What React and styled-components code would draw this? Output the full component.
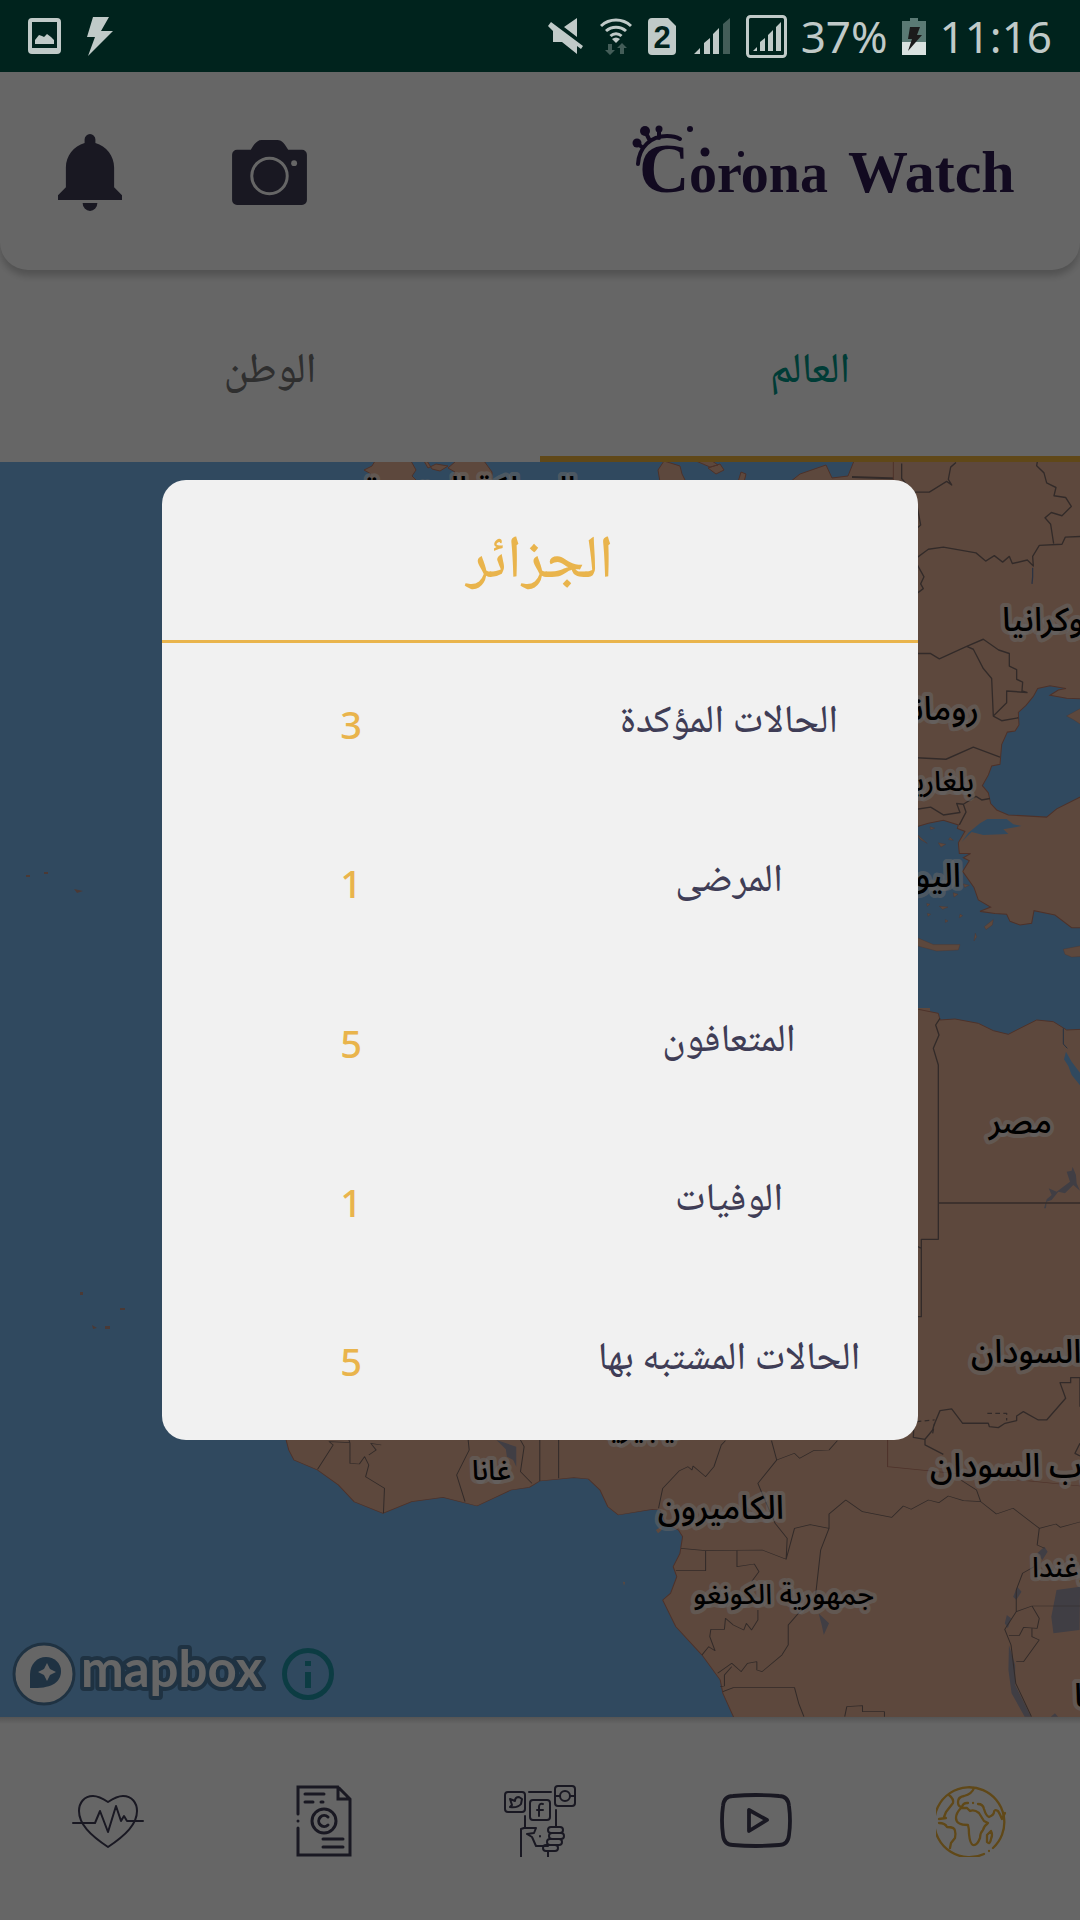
import React, { useState } from "react";
import styled, { createGlobalStyle } from "styled-components";

const GlobalStyle = createGlobalStyle`
  * { box-sizing: border-box; }
  body { margin: 0; background: #ffffff; }
  button { border: 0; padding: 0; background: none; color: inherit; font: inherit; cursor: pointer; }
  svg { display: block; flex: none; }
`;

const arabic = `"Noto Naskh Arabic", "Noto Sans", "DejaVu Sans", sans-serif`;
const ink = "#3f3d56";
const gold = "#e9b44c";

const Page = styled.div`
  min-height: 100vh;
  display: flex;
  flex-direction: column;
  font-family: ${arabic};
`;

/* ---------- status bar ---------- */

const StatusBar = styled.div`
  position: relative;
  z-index: 3;
  height: 72px;
  display: flex;
  justify-content: space-between;
  align-items: center;
  padding: 0 28px;
  background: #00231d;
  color: #c0cac8;
`;

const StatusGroup = styled.div`
  display: flex;
  align-items: center;
  gap: ${(p) => p.$gap}px;
`;

const StatusText = styled.span`
  font: 44px/72px "Noto Sans", sans-serif;
`;

/* ---------- header ---------- */

const Header = styled.header`
  position: relative;
  z-index: 1;
  height: 198px;
  display: flex;
  justify-content: space-between;
  align-items: center;
  padding: 0 60px 0 58px;
  border-radius: 0 0 28px 28px;
  background: #ffffff;
  box-shadow: 0 6px 7px rgba(0, 0, 0, 0.2);
`;

const HeaderActions = styled.div`
  display: flex;
  align-items: center;
  gap: 110px;
  padding-top: 2px;
  color: ${ink};
`;

/* ---------- tabs ---------- */

const Tabs = styled.div`
  display: flex;
  direction: ltr;
`;

const Tab = styled.button`
  && {
    flex: 1;
    height: 192px;
    padding: 20px 0 0;
    border-bottom: 6px solid ${(p) => (p.$active ? "#f0b43c" : "transparent")};
    color: ${(p) => (p.$active ? "#009688" : "#757575")};
    font: 500 42px/64px ${arabic};
  }
`;

/* ---------- map ---------- */

const MapArea = styled.main`
  position: relative;
  flex: 1;
  min-height: 600px;
  overflow: hidden;
  background: #78b6ed;
`;

const MapCanvas = styled.svg`
  position: absolute;
  inset: 0;
  width: 100%;
  height: 100%;
`;

const MapLabel = styled.text`
  font: 500 ${(p) => p.$size}px "Noto Sans Arabic", "DejaVu Sans", sans-serif;
  fill: #000000;
  stroke: rgba(255, 255, 255, 0.55);
  stroke-width: 8px;
  stroke-linejoin: round;
  paint-order: stroke;
  direction: rtl;
`;

const Attribution = styled.div`
  position: absolute;
  left: 12px;
  bottom: 11px;
  display: flex;
  align-items: center;
  gap: 16px;
`;

const LogoText = styled.text`
  font: 700 51px Lato, sans-serif;
  fill: #ffffff;
  stroke: #4e7da5;
  stroke-width: 8px;
  stroke-linejoin: round;
  paint-order: stroke;
`;

/* ---------- bottom navigation ---------- */

const BottomNav = styled.nav`
  height: 203px;
  display: flex;
  background: linear-gradient(#d4d4d4, #ffffff 7px);
`;

const NavButton = styled.button`
  flex: 1;
  && {
    display: flex;
    align-items: center;
    justify-content: center;
    padding-top: 4px;
    color: ${(p) => (p.$active ? "#f0b43c" : ink)};
  }
`;

/* ---------- dialog ---------- */

const Backdrop = styled.div`
  position: fixed;
  inset: 0;
  z-index: 2;
  display: flex;
  align-items: center;
  justify-content: center;
  background: rgba(0, 0, 0, 0.6);
`;

const Dialog = styled.section`
  width: 70%;
  min-height: 50vh;
  display: flex;
  flex-direction: column;
  border-radius: 24px;
  background: #f1f1f1;
  direction: rtl;
`;

const DialogTitle = styled.h2`
  margin: 0;
  padding: 36px 0 28px;
  border-bottom: 3px solid ${gold};
  color: ${gold};
  text-align: center;
  font: 500 60px/96px ${arabic};
`;

const Stats = styled.dl`
  flex: 1;
  margin: 0;
  display: flex;
  flex-direction: column;
`;

const StatRow = styled.div`
  flex: 1;
  display: grid;
  grid-template-columns: 1fr 1fr;
  align-items: center;
  padding-top: 2px;
  text-align: center;
`;

const StatLabel = styled.dt`
  color: ${ink};
  font: 500 39px/64px ${arabic};
`;

const StatValue = styled.dd`
  margin: 0;
  color: ${gold};
  font: 500 38px/64px "Noto Sans", sans-serif;
`;

/* ---------- drawings ---------- */

const PhotoIcon = () => (
  <svg width="33" height="36" viewBox="0 0 33 36">
    <path fill="currentColor" fillRule="evenodd" d="M4 0h25a4 4 0 0 1 4 4v28a4 4 0 0 1-4 4H4a4 4 0 0 1-4-4V4a4 4 0 0 1 4-4zM4 4v26h25V4z" />
    <path fill="currentColor" d="M7 26v-4l4-5 3 1 2 1 3-3 4 3 3 3v4z" />
  </svg>
);

const BoltIcon = () => (
  <svg width="26" height="39" viewBox="0 0 26 39">
    <path fill="currentColor" d="M6 0h16l-8 14h12L1 39l7-19H0z" />
  </svg>
);

const MuteIcon = () => (
  <svg width="36" height="36" viewBox="0 0 36 36">
    <path fill="currentColor" d="M29 0v19L16 9zM3 4l32 24-2 3-4-3v8L14 24H5V13L0 8z" />
  </svg>
);

const WifiIcon = () => (
  <svg width="32" height="37" viewBox="0 0 32 37">
    <g fill="none" stroke="currentColor" strokeWidth="3">
      <path d="M1 8a22 22 0 0 1 30 0M6 13a15 15 0 0 1 20 0M10.500 18a8 8 0 0 1 11 0" />
    </g>
    <path fill="currentColor" d="M12 21q4-3 8 0l-4 4z" />
    <path fill="currentColor" opacity=".35" d="M8 26h4v6h3l-5 5-5-5h3zM20 36v-6h-3l5-5 5 5h-3v6z" />
  </svg>
);

const SimDigit = styled.text`
  font: 700 31px "Liberation Sans", sans-serif;
  fill: #00231d;
`;

const SimIcon = () => (
  <svg width="30" height="37" viewBox="0 0 30 37">
    <path fill="currentColor" d="M4 0h16l8 8v25a4 4 0 0 1-4 4H4a4 4 0 0 1-4-4V4a4 4 0 0 1 4-4z" />
    <SimDigit x="14" y="30" textAnchor="middle">2</SimDigit>
  </svg>
);

const SignalIcon = () => (
  <svg width="36" height="36" viewBox="0 0 36 36">
    <path fill="currentColor" d="M0 36l6-6v6zM10 36V25l6-5v16zM19 36V16l6-6v26z" />
    <path fill="currentColor" opacity=".35" d="M29 36V6l7-6v36z" />
  </svg>
);

const BoxedSignalIcon = () => (
  <svg width="41" height="43" viewBox="0 0 41 43">
    <rect x="1.500" y="1.500" width="38" height="40" rx="3" fill="none" stroke="currentColor" strokeWidth="3" />
    <path fill="currentColor" d="M7 36l4-4v4zM14 36v-9l5-4v13zM22 36V20l5-5v21zM30 36V12l5-5v29z" />
  </svg>
);

const BatteryIcon = () => (
  <svg width="24" height="37" viewBox="0 0 24 37">
    <path fill="#5a7a74" d="M8 0h8v3h8v21H0V3h8z" />
    <path fill="#d9e2e0" d="M0 24h24v13H0z" />
    <path fill="#1b1b1b" d="M8 9h10l-3 8h5L6 33l4-12H6z" />
  </svg>
);

const BellIcon = () => (
  <svg width="64" height="77" viewBox="0 0 65 78" fill="currentColor">
    <path d="M32.500 0a5.500 5.500 0 0 1 5.500 5.500V9c11 3 19 13 19 25v20l8 8v5H0v-5l8-8V34C8 22 16 12 27 9V5.500A5.500 5.500 0 0 1 32.500 0z" />
    <path d="M25 70h15a7.500 8 0 0 1-15 0z" />
  </svg>
);

const CameraIcon = () => (
  <svg width="75" height="65" viewBox="0 0 76 66">
    <path fill="currentColor" d="M30 0h16c5 0 8 5 11 10h14a5 5 0 0 1 5 5v46a5 5 0 0 1-5 5H5a5 5 0 0 1-5-5V15a5 5 0 0 1 5-5h14C22 5 25 0 30 0z" />
    <circle cx="38" cy="36.500" r="18" fill="none" stroke="#ffffff" strokeWidth="3" />
    <circle cx="63" cy="23.500" r="3" fill="#ffffff" />
  </svg>
);

const BrandText = styled.text`
  font: 700 ${(p) => p.$size}px "Liberation Serif", serif;
`;

const BrandLogo = () => (
  <svg width="388" height="94" viewBox="0 0 388 94" fill="#2d1b52" role="img" aria-label="Corona Watch">
    <BrandText $size={70} x="7" y="68">C</BrandText>
    <BrandText $size={56} x="57" y="68">orona</BrandText>
    <BrandText $size={60} x="216" y="68">Watch</BrandText>
    <path d="M6 40C7 23 19 12 35 12q8 0 13 3M13 7l5 10M27 5v9M5 19l6 5" fill="none" stroke="#2d1b52" strokeWidth="4" strokeLinecap="round" />
    <circle cx="13" cy="7" r="5" />
    <circle cx="27" cy="5" r="3.500" />
    <circle cx="5" cy="19" r="4.500" />
    <circle cx="58" cy="5" r="3" />
    <circle cx="73" cy="28" r="4.500" />
    <circle cx="109" cy="30" r="3" />
  </svg>
);

const MapboxLogo = () => (
  <svg width="254" height="64" viewBox="0 0 254 64" role="img" aria-label="mapbox">
    <circle cx="32" cy="32" r="30" fill="#ffffff" stroke="#4e7da5" strokeWidth="3" />
    <path fill="#4e7da5" d="M18 46V33c0-11 7-18 16-18 8 0 15 6 15 14 0 11-9 18-31 17z" />
    <path fill="#ffffff" d="M35 21l3 6 6 3-6 3-3 6-3-6-6-3 6-3z" />
    <LogoText x="69" y="45">mapbox</LogoText>
  </svg>
);

const InfoIcon = () => (
  <svg width="52" height="52" viewBox="0 0 52 52">
    <circle cx="26" cy="26" r="23.500" fill="none" stroke="#2096a8" strokeWidth="5" />
    <path fill="#2096a8" d="M23 13h6v5h-6zM23 24h6v16h-6z" />
  </svg>
);

const lineProps = { fill: "none", stroke: "currentColor", strokeLinecap: "round", strokeLinejoin: "round" };

const HeartIcon = () => (
  <svg width="72" height="72" viewBox="0 0 72 72" {...lineProps} strokeWidth="2">
    <path d="M36 17C30 13 26 11 21 11 12 11 7 18 7 26c0 13 11 24 29 36 18-12 29-23 29-36 0-8-5-15-14-15-5 0-9 2-15 6z" />
    <path d="M1 38h22l5-12 8 21 8-26 5 15 3-5 3 5h16" />
  </svg>
);

const DocumentIcon = () => (
  <svg width="72" height="72" viewBox="0 0 72 72" {...lineProps} strokeWidth="3" strokeLinejoin="miter">
    <path d="M10 29V2h40l12 12v56H10V43M50 2v12h12M10 36v.1M17 9h19M17 17h8M33 17h2M35 54h20M35 62h20" />
    <circle cx="36" cy="36" r="12" />
    <path d="M40 32a5.500 5.500 0 1 0 0 8" />
  </svg>
);

const SocialIcon = () => (
  <svg width="72" height="72" viewBox="0 0 72 72" {...lineProps} strokeWidth="2">
    <rect x="1" y="7" width="20" height="20" rx="3" />
    <rect x="26" y="15" width="20" height="20" rx="3" />
    <rect x="51" y="1" width="20" height="20" rx="3" />
    <path d="M6 14l5 2q0-4 4-4l3 2-1 5q-3 4-11 3l2-2z" />
    <path d="M39 19q-4-1-4 3v9M33 25h6" />
    <circle cx="61" cy="11" r="5" />
    <path d="M51 11h5M66 11h5M25 7h22M52 25v16M21 31v12" />
    <path d="M17 72V44l3-1h12l-2 5-7 1 5 3 4 9h12M36 51v.5" />
    <rect x="44" y="42" width="15" height="6" rx="3" />
    <rect x="45" y="48" width="15" height="6" rx="3" />
    <rect x="43" y="54" width="15" height="6" rx="3" />
    <rect x="39" y="60" width="15" height="6" rx="3" />
    <path d="M44 66v6" />
  </svg>
);

const VideoIcon = () => (
  <svg width="72" height="72" viewBox="0 0 72 72" {...lineProps} strokeWidth="3.800">
    <path d="M13 11q23-2 46 0 9 0 10 10 2 15 0 29-1 10-10 10-23 2-46 0-9 0-10-10-2-15 0-29 1-10 10-10z" />
    <path d="M29 25v21l18-11z" />
  </svg>
);

const GlobeIcon = () => (
  <svg width="72" height="72" viewBox="0 0 72 72" {...lineProps} strokeWidth="2.300">
    <path d="M48 69A35 35 0 1 1 57 63M53 66v.1" />
    <path d="M38 3q-2 6-10 8-6 1-6 6t4 5q1-4 5-4h1M37 18h.1M42 19q5 0 6 5 2 7 5 8 5-2 5-5 0-3 4-1 2 3 4 8l3-6" />
    <path d="M13 10q5 4 4 8l-7 9-2 5 2 1-7 1M3 38q6 0 8 4 8 0 8 4 1 3 0 7l-4 5-1 5" />
    <path d="M25 23q-5 5-5 10 0 7 12 7 1 3 1 9 1 10 4 11 4 1 7-7 0-5 3-8 1-4 5-7l-4-2-5-8q-5-4-9-2l-3-3z" />
    <path d="M55 46l-4 4v7q3 3 4-3 2-4 0-8z" />
  </svg>
);

const landProps = { fill: "#e9b498", stroke: "#c07c68", strokeWidth: 1 };
const borderProps = { fill: "none", stroke: "#7d6a66", strokeWidth: 2, strokeLinejoin: "round" };

const labels = [
  { text: "المملكة المتحدة", x: 576, y: 500, size: 33 },
  { text: "أوكرانيا", x: 1002, y: 631, size: 33, left: true },
  { text: "رومانيا", x: 979, y: 720, size: 33 },
  { text: "بلغاريا", x: 974, y: 791, size: 28 },
  { text: "اليونان", x: 961, y: 887, size: 33 },
  { text: "مصر", x: 1052, y: 1133, size: 33 },
  { text: "السودان", x: 971, y: 1363, size: 33, left: true },
  { text: "جنوب السودان", x: 930, y: 1477, size: 33, left: true },
  { text: "أوغندا", x: 1032, y: 1577, size: 28, left: true },
  { text: "تنزانيا", x: 1074, y: 1707, size: 33, left: true },
  { text: "نيجيريا", x: 684, y: 1437, size: 30 },
  { text: "غانا", x: 511, y: 1480, size: 28 },
  { text: "الكاميرون", x: 784, y: 1519, size: 33 },
  { text: "جمهورية الكونغو", x: 874, y: 1604, size: 28 },
];

const WorldMap = () => (
  <MapCanvas viewBox="0 462 1080 1255" preserveAspectRatio="xMidYMid slice" aria-hidden="true">
    {/* northern Europe */}
    <g {...landProps}>
      <path d="M366 482l5-8-7-4 8-4 3-5h36l5 9-4 6 6 6zM424 461l4 7 8-4 12 2-8 5-8-2-5-8zM450 482l5-10-7-4 8-7h28l8 11v10zM660 482l-2-12 6-9 16 5 2 8 4 8zM696 461l14 6 8-2-6-4zM738 482l3-10 5 2-2 8zM708 468l8 6 8-4-4-6z" />
      <path d="M790 482l10-8 26-9 6 13 16-2 6-15h60v220H300V560l220-78z" />
    </g>
    <path {...borderProps} d="M852 477l60 2M902 461v18" />
    {/* Africa */}
    <g {...landProps} stroke="none">
      <path d="M290 1440V1250l30-130 100-150 200-30 130 100 160-32h20v500z" />
    </g>

    {/* eastern Europe, Black Sea and Turkey */}
    <g transform="translate(900 450) scale(.3333 .3571)">
      <path {...landProps} strokeWidth="3" d="M-20 30H545V697L500 695 450 687 475 672 498 668 450 660 413 668 400 690 378 715 355 735 357 770 345 787 322 790 305 825 300 880 275 885 265 910 247 940 265 960 272 990 290 1008 325 1022 440 1028 470 1005 545 970V1338L515 1338 465 1302 402 1290 395 1325 360 1330 330 1320 320 1300 285 1298 240 1292 272 1280 235 1260 222 1225 188 1180 208 1150 190 1142 212 1130 178 1130 175 1100 195 1068 172 1060 175 1050 130 1037 85 1045 50 1055 -20 1060Z" />
      <path fill="#78b6ed" d="M185 1098L205 1072 240 1045 262 1033 320 1033 340 1048 365 1053 310 1062 325 1075 250 1078 215 1070Z" />
      <path {...landProps} d="M545 722L500 745 520 755 545 770ZM50 1365L100 1385 180 1385 175 1400 110 1403 50 1388ZM253 1335L280 1315 277 1330 258 1343ZM490 1398L545 1388V1418L515 1420 495 1412ZM50 1075L82 1102 60 1090ZM90 1055l14 4-12 4ZM115 1100l22 4-14 8ZM150 1085l10 8-14-2ZM118 1278l26 2-16 6ZM82 1298l10 2-8 6ZM80 1270l10 2-8 6ZM180 1300l8 4-10 6ZM160 1240l14 4-12 8ZM226 1353l4 10-8 12ZM190 1215l18 4-14 6ZM136 1315l8 4-8 4Z" />
      <g {...borderProps} strokeWidth="4">
        <path d="M5 38L5 80 38 118H88L140 88 155 98 145 82 152 48 168 35M412 33L410 44 432 64 440 92 468 105 462 128 497 133 514 158 486 184 454 175 435 190 452 208 461 262M50 150L62 210 50 220M50 302L85 278 130 272 228 288 257 311 283 296 308 314 328 298 337 318 382 308 400 325 398 298 418 267 486 264 496 244 545 242M50 318L72 355 62 375 70 388 50 402M50 570H92L118 585 200 550 250 530 296 560 328 570V605L350 615V642L368 650 366 675 381 679 320 675V708L280 745 305 758 355 750M200 550L220 558 250 612 275 640 280 745M50 862L138 866 220 832 300 860M50 1006L92 1000 130 1022 180 1015 170 990 190 992 198 1014 178 1050M190 992L228 970 245 980 270 976" />
        <path stroke="#6f7fa5" d="M398 330v25l-2 20" />
      </g>
    </g>

    {/* Nile basin */}
    <g transform="translate(900 1000) scale(.3333)">
      <path {...landProps} strokeWidth="3" d="M-20 1520V20L50 27 115 40 120 60 165 57 235 70 280 92 325 103 360 85 410 60 460 65 500 90 545 88V1520Z" />
      <path fill="#e9b498" d="M-40 1300H545V1525H-40Z" />
      <path fill="#78b6ed" d="M498 155L515 185 545 225V262L515 225 505 198 492 178Z" />
      <path fill="none" stroke="#5a7aa0" strokeWidth="3" d="M490 85V132L502 145" />
      <path fill="#a09bab" d="M432 625L440 598 455 585 446 565 470 575 490 560 510 545 500 515 515 512 518 500 528 525 530 550 540 572 520 555 495 580 475 575 455 600 440 605 438 625Z" />
      <g {...borderProps} strokeWidth="4">
        <path d="M120 55L107 75 117 105 100 145 115 195V718H64V950H50M50 738L64 745M117 609H545M540 1220V1133H512V1148H480L497 1195 440 1260H415L370 1235 350 1248V1262L315 1270 295 1283 268 1280 265 1270H188L155 1227 120 1232 102 1275 98 1290 75 1318 40 1312 42 1270M75 1318V1335L130 1363M540 1330L525 1360 540 1368M190 1450L230 1472 240 1500M130 1500L145 1488 205 1500" />
        <path strokeDasharray="14 10" d="M50 1265L104 1260M98 1300l6-30M262 1240H320V1262" />
      </g>
    </g>

    {/* Gulf of Guinea and central Africa */}
    <g transform="translate(260 1400) scale(.523 .3333)">
      <path {...landProps} strokeWidth="2" d="M50 80L50 120 55 150 65 180 110 210 150 255 180 305 235 340 290 305 350 292 415 318 480 270 515 262 535 243 600 233 628 237 650 270 665 320 685 345 750 328 765 330 775 370 800 390 808 410 803 460 790 500 797 530 785 580 770 600 795 680 845 765 880 840 885 880 908 960H1580V260L1200 200V80Z" />
      <g fill="#a09bab">
        <path d="M452 120l38 20v60l-6-20-12-10-2-22zM1568 560l-45 10-10 80 4 50 50-10zM1448 560l8 15-10 25-6-10zM1428 645l8 10-6 30-6-15zM1432 735l12 60v60l30 95h-12l-25-70-6-70zM1068 640l20 30-10 35-4-30zM1520 940l6 10h-14zM1500 440l6 15-10 25-10-20z" />
      </g>
      <g {...borderProps}>
        <path d="M110 208L140 135 132 125 172 128V190L190 192 200 170 208 195 202 230 238 265 236 340M170 120L172 128M208 165L222 150 212 130 232 135M398 120L400 150 376 225 392 305M498 120L505 140 498 215 520 250M535 120V243M571 120V235M762 325L770 265 802 212 818 200 826 210 828 198 852 230 868 200 882 135 890 122M978 122L988 180 1022 160 1032 175 1058 152 1088 150 1104 122M988 180L952 250 960 280 985 370 1008 415 1006 478 960 450 852 452 805 445M1006 478L1022 385 1052 374 1088 385 1088 342 1120 300 1152 335 1208 352 1230 318 1245 328 1278 300 1298 308 1316 288 1345 302 1378 305 1370 270 1340 240M1378 305L1408 342 1440 325 1490 385 1522 372 1530 382 1568 366M852 452V512H795M912 452V500L945 492 954 515 940 545M1088 385L1072 450 1062 590 1035 630 1010 675V735L998 765 960 815 950 810V785L932 790 920 815 902 790 875 820M952 630V660L940 690 930 670 925 690 905 675 890 655 888 688H862L860 710 870 752 858 740 845 765M902 800L888 825 888 858 880 860M885 875L905 863H1022L1030 910 1040 950M1118 950L1122 920 1152 917V935H1194V950M1490 385L1486 435 1500 445M1480 500L1458 520 1446 570V635L1424 688 1436 735 1445 850 1475 950M1446 635L1476 618H1568M1476 618L1490 655 1486 685 1460 682 1452 706H1432M1476 685V710L1490 720 1460 785H1446" />
      </g>
      <path fill="#e9b498" d="M757 390l12-12-2 14-6 8zM694 545l4 2-2 10z" />
    </g>

    {/* Atlantic islands */}
    <path fill="#b98f86" d="M26 875h4v2h-4zM44 872h4v2h-4zM74 889l9 2-6 2zM80 1292h3v3h-3zM92 1325l5 3-4 1zM105 1326h5v3h-5zM120 1308h5v2h-5z" />

    {labels.map((l) => (
      <MapLabel key={l.text} $size={l.size} x={l.x} y={l.y} textAnchor={l.left ? "end" : "start"}>
        {l.text}
      </MapLabel>
    ))}
  </MapCanvas>
);

const tabs = ["الوطن", "العالم"];

const navItems = [
  { name: "الصحة", Icon: HeartIcon },
  { name: "المقالات", Icon: DocumentIcon },
  { name: "التواصل", Icon: SocialIcon },
  { name: "الفيديو", Icon: VideoIcon },
  { name: "الخريطة", Icon: GlobeIcon },
];

const stats = [
  ["الحالات المؤكدة", 3],
  ["المرضى", 1],
  ["المتعافون", 5],
  ["الوفيات", 1],
  ["الحالات المشتبه بها", 5],
];

export default function App() {
  const [tab, setTab] = useState(1);
  const [section, setSection] = useState(4);

  return (
    <Page>
      <GlobalStyle />
      <StatusBar>
        <StatusGroup $gap={26}>
          <PhotoIcon />
          <BoltIcon />
        </StatusGroup>
        <StatusGroup $gap={14}>
          <StatusGroup $gap={16}>
            <MuteIcon />
            <WifiIcon />
            <SimIcon />
            <SignalIcon />
            <BoxedSignalIcon />
          </StatusGroup>
          <StatusText>37%</StatusText>
          <BatteryIcon />
          <StatusText>11:16</StatusText>
        </StatusGroup>
      </StatusBar>

      <Header>
        <HeaderActions>
          <button type="button" aria-label="الإشعارات"><BellIcon /></button>
          <button type="button" aria-label="الكاميرا"><CameraIcon /></button>
        </HeaderActions>
        <BrandLogo />
      </Header>

      <Tabs role="tablist">
        {tabs.map((name, i) => (
          <Tab key={name} type="button" role="tab" aria-selected={tab === i} $active={tab === i} onClick={() => setTab(i)}>
            {name}
          </Tab>
        ))}
      </Tabs>

      <MapArea>
        <WorldMap />
        <Attribution>
          <MapboxLogo />
          <button type="button" aria-label="معلومات"><InfoIcon /></button>
        </Attribution>
      </MapArea>

      <BottomNav>
        {navItems.map(({ name, Icon }, i) => (
          <NavButton key={name} type="button" aria-label={name} $active={section === i} onClick={() => setSection(i)}>
            <Icon />
          </NavButton>
        ))}
      </BottomNav>

      <Backdrop>
        <Dialog role="dialog" aria-modal="true" aria-labelledby="country">
          <DialogTitle id="country">الجزائر</DialogTitle>
          <Stats>
            {stats.map(([label, value]) => (
              <StatRow key={label}>
                <StatLabel>{label}</StatLabel>
                <StatValue>{value}</StatValue>
              </StatRow>
            ))}
          </Stats>
        </Dialog>
      </Backdrop>
    </Page>
  );
}
